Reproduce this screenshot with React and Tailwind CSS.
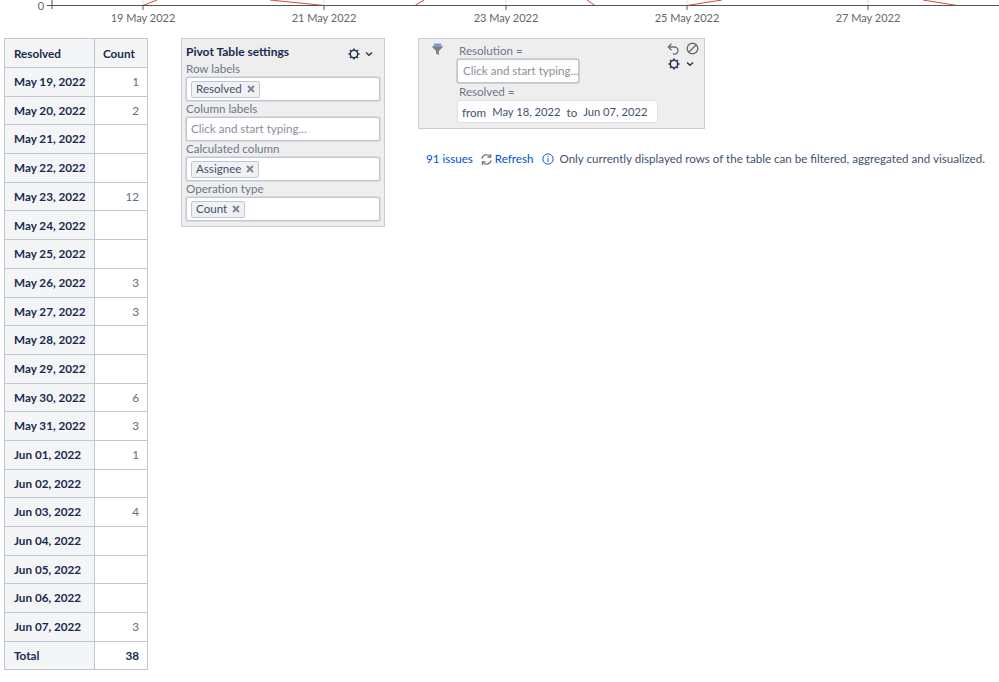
import React from "react";

const rows = [
  ["May 19, 2022", "1"], ["May 20, 2022", "2"], ["May 21, 2022", ""], ["May 22, 2022", ""],
  ["May 23, 2022", "12"], ["May 24, 2022", ""], ["May 25, 2022", ""], ["May 26, 2022", "3"],
  ["May 27, 2022", "3"], ["May 28, 2022", ""], ["May 29, 2022", ""], ["May 30, 2022", "6"],
  ["May 31, 2022", "3"], ["Jun 01, 2022", "1"], ["Jun 02, 2022", ""], ["Jun 03, 2022", "4"],
  ["Jun 04, 2022", ""], ["Jun 05, 2022", ""], ["Jun 06, 2022", ""], ["Jun 07, 2022", "3"],
];

const ticks = [
  [143, "19 May 2022"], [324, "21 May 2022"], [506, "23 May 2022"], [687, "25 May 2022"], [868, "27 May 2022"],
];

function Gear({ className }) {
  return (
    <svg viewBox="0 0 12 12" className={className} fill="none" stroke="#253858" strokeWidth="1.5">
      <circle cx="6" cy="6" r="3.7" />
      <g strokeWidth="1.6" strokeLinecap="butt">
        <path d="M6 0.4V2M6 10V11.6M0.4 6H2M10 6H11.6M2 2L3.2 3.2M8.8 8.8L10 10M10 2L8.8 3.2M3.2 8.8L2 10" />
      </g>
    </svg>
  );
}

function Chevron({ className }) {
  return (
    <svg viewBox="0 0 8 6" className={className} fill="none" stroke="#253858" strokeWidth="1.4">
      <path d="M1 1.5L4 4.3L7 1.5" />
    </svg>
  );
}

function Chip({ label }) {
  return (
    <span className="inline-flex items-center h-[17px] px-[4px] border border-[#c1c7d0] rounded-[2px] bg-[#f0f1f3] text-[#42526e] text-[11.6px] leading-none">
      {label}
      <svg viewBox="0 0 8 8" className="w-[8px] h-[8px] ml-[5px]" stroke="#7a8494" strokeWidth="1.8">
        <path d="M1 1L7 7M7 1L1 7" />
      </svg>
    </span>
  );
}

function Field({ children, placeholder }) {
  return (
    <div className="h-[24px] w-[194px] flex items-center pl-[4px] bg-white border border-[#c1c7d0] rounded-[2px] shadow-[0_0_0_0.5px_#c1c7d0]">
      {placeholder ? <span className="text-[11.6px] text-[#8a8f98]">{placeholder}</span> : children}
    </div>
  );
}

function Label({ children }) {
  return <div className="text-[11.6px] leading-[16px] text-[#6b778c]">{children}</div>;
}

export default function App() {
  return (
    <div className="w-[999px] h-[682px] overflow-hidden bg-white font-['Lato','Noto_Sans',sans-serif] text-[11.6px]">
      <svg width="999" height="28" className="block" viewBox="0 0 999 28">
        {ticks.map(([x]) => (
          <line key={x} x1={x} y1="0" x2={x} y2="5" stroke="#e6e6e6" />
        ))}
        <g stroke="#d9453c" strokeWidth="1" fill="none">
          <path d="M143 5.5L157 0" />
          <path d="M270 0L324 5.5" />
          <path d="M415 5.5L424 0" />
          <path d="M587 0L595 5.5" />
          <path d="M687 5.5L722 0" />
          <path d="M923 0L957 5.5" />
        </g>
        <line x1="52" y1="0" x2="52" y2="9" stroke="#555" />
        <line x1="47" y1="5.5" x2="999" y2="5.5" stroke="#555" />
        {ticks.map(([x]) => (
          <line key={x} x1={x} y1="5" x2={x} y2="10" stroke="#555" />
        ))}
        <text x="41" y="9.5" textAnchor="middle" fontSize="11" fill="#666">0</text>
        {ticks.map(([x, t]) => (
          <text key={x} x={x} y="22" textAnchor="middle" fontSize="11" fill="#666">{t}</text>
        ))}
      </svg>

      <div className="flex items-start pl-[4px] pt-[10px]">
        <table className="w-[143px] shrink-0 border-collapse text-[11.7px] text-[#172b4d] table-fixed">
          <colgroup>
            <col className="w-[90px]" />
            <col className="w-[53px]" />
          </colgroup>
          <thead>
            <tr className="h-[29px]">
              <th className="border border-[#c1c7d0] bg-[#f4f5f7] text-left pl-[9px] pt-[2px] font-bold">Resolved</th>
              <th className="border border-[#c1c7d0] bg-[#f4f5f7] text-left pl-[8px] pt-[2px] font-bold">Count</th>
            </tr>
          </thead>
          <tbody>
            {rows.map(([d, c]) => (
              <tr key={d} className="h-[28.7px]">
                <td className="border border-[#c1c7d0] bg-[#f4f5f7] pl-[9px] font-bold whitespace-nowrap">{d}</td>
                <td className="border border-[#c1c7d0] text-right pr-[8px] text-[#5e6c84]">{c}</td>
              </tr>
            ))}
            <tr className="h-[28.7px]">
              <td className="border border-[#c1c7d0] bg-[#f4f5f7] pl-[9px] font-bold">Total</td>
              <td className="border border-[#c1c7d0] text-right pr-[8px] font-bold">38</td>
            </tr>
          </tbody>
        </table>

        <div className="ml-[33px] w-[204px] h-[189px] shrink-0 bg-[#eeeeee] border border-[#c9ced6] pl-[4px] pt-[4px]">
          <div className="flex items-center justify-between h-[18px]">
            <span className="font-bold text-[12px] text-[#172b4d]">Pivot Table settings</span>
            <div className="flex items-center gap-[5px] mr-[11px] mt-[4px]">
              <Gear className="w-[12px] h-[12px]" />
              <Chevron className="w-[8px] h-[6px]" />
            </div>
          </div>
          <Label>Row labels</Label>
          <Field><Chip label="Resolved" /></Field>
          <Label>Column labels</Label>
          <Field placeholder="Click and start typing..." />
          <Label>Calculated column</Label>
          <Field><Chip label="Assignee" /></Field>
          <Label>Operation type</Label>
          <Field><Chip label="Count" /></Field>
        </div>

        <div className="ml-[33px] shrink-0">
          <div className="relative w-[287px] h-[91px] bg-[#eeeeee] border border-[#c9ced6] pl-[38px] pt-[4px]">
            <svg viewBox="0 0 14 14" className="absolute left-[12px] top-[4px] w-[13px] h-[13px]">
              <path d="M3 0.5H11V3.5H3Z" fill="#6f9fd8" />
              <path d="M0.5 3.5H13.5L8.5 8.5V13L5.5 11.5V8.5Z" fill="#7a7f87" />
            </svg>
            <div className="absolute right-[5px] top-[3px] flex flex-col items-end">
              <div className="flex items-center gap-[7px]">
                <svg viewBox="0 0 12 12" className="w-[12px] h-[12px]" fill="none" stroke="#6b6f76" strokeWidth="1.3">
                  <path d="M1.5 4H7.5A3.5 3.5 0 0 1 7.5 11H6" />
                  <path d="M4.5 0.8L1.3 4L4.5 7.2" />
                </svg>
                <svg viewBox="0 0 14 14" className="w-[13px] h-[13px]" fill="none" stroke="#6b6f76" strokeWidth="1.5">
                  <circle cx="7" cy="7" r="5.7" />
                  <path d="M3 11L11 3" />
                </svg>
              </div>
              <div className="flex items-center gap-[6px] mr-[5px] mt-[3px]">
                <Gear className="w-[12px] h-[12px]" />
                <Chevron className="w-[8px] h-[6px]" />
              </div>
            </div>
            <Label><span className="pl-[2px]">Resolution =</span></Label>
            <div className="h-[24px] w-[122px] flex items-center pl-[5px] bg-white border border-[#c1c7d0] rounded-[2px] shadow-[0_0_0_0.5px_#aab0ba] text-[#8a8f98] whitespace-nowrap">Click and start typing...</div>
            <div className="mt-[1px]"><Label><span className="pl-[2px]">Resolved =</span></Label></div>
            <div className="h-[23px] w-[201px] flex items-center pl-[4px] pt-[2px] bg-white border border-[#dfe1e6] rounded-[2px] text-[#42526e] text-[11.2px] whitespace-nowrap">
              <span className="text-[11.6px]">from</span>
              <span className="ml-[6px]">May 18, 2022</span>
              <span className="ml-[6px] text-[11.6px]">to</span>
              <span className="ml-[6px]">Jun 07, 2022</span>
            </div>
          </div>
          <div className="flex items-center mt-[21px] ml-[8px] h-[18px] whitespace-nowrap">
            <span className="text-[#0052cc]">91 issues</span>
            <svg viewBox="0 0 14 14" className="w-[13px] h-[13px] ml-[7px]" fill="none" stroke="#6b6f76" strokeWidth="1.2">
              <path d="M2 6A5 5 0 0 1 11 4M12 8A5 5 0 0 1 3 10" />
              <path d="M11.5 1V4.5H8M2.5 13V9.5H6" />
            </svg>
            <span className="text-[#0052cc] ml-[2px]">Refresh</span>
            <svg viewBox="0 0 14 14" className="w-[12px] h-[12px] ml-[9px]" fill="none" stroke="#0052cc" strokeWidth="1.1">
              <circle cx="7" cy="7" r="6" />
              <path d="M7 6V10.5M7 3.2V4.8" />
            </svg>
            <span className="text-[#42526e] ml-[5px]">Only currently displayed rows of the table can be filtered, aggregated and visualized.</span>
          </div>
        </div>
      </div>
    </div>
  );
}
